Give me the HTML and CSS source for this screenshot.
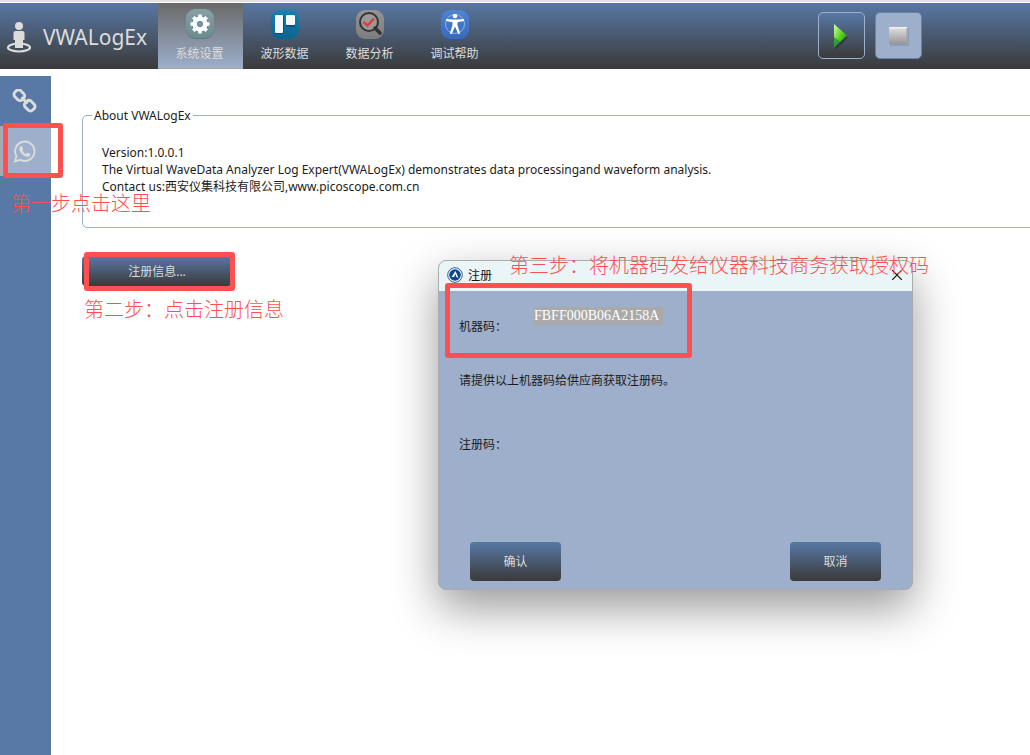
FILE: index.html
```html
<!DOCTYPE html>
<html lang="zh-CN">
<head>
<meta charset="utf-8">
<meta name="viewport" content="width=device-width, initial-scale=1">
<title>VWALogEx</title>
<link rel="stylesheet" href="styles.css">
</head>
<body>
<header class="topbar">
  <div class="brand">
    <svg class="brand-icon" viewBox="0 0 26 32" aria-hidden="true">
      <ellipse cx="13" cy="26.500" rx="11" ry="4" fill="none" stroke="#dcdcdc" stroke-width="2.200"/>
      <path d="M9.500 10h7q2 0 2 2v7h-1.500v8h-8v-8h-1.500v-7q0-2 2-2z" fill="#dcdcdc"/>
      <circle cx="13" cy="5" r="4" fill="#dcdcdc"/>
    </svg>
    <span>VWALogEx</span>
  </div>
  <nav class="tabs">
    <button class="tab tab-active" type="button">
      <svg class="tab-icon" viewBox="0 0 30 30" aria-hidden="true">
        <defs><linearGradient id="g1" x2="0" y2="1"><stop stop-color="#85a0a4"/><stop offset="1" stop-color="#6c8c90"/></linearGradient></defs>
        <rect x="1" y="2" width="28" height="28" rx="9" fill="#4d6468" opacity=".6"/>
        <rect x="1" y="0" width="28" height="29" rx="9" fill="url(#g1)"/>
        <circle cx="15" cy="15" r="5.300" fill="none" stroke="#fff" stroke-width="4.300"/>
        <g stroke="#fff" stroke-width="3.600"><path d="M15 5.500v4M15 20.500v4M5.500 15h4M20.500 15h4M8.300 8.300l3 3M18.700 18.700l3 3M21.700 8.300l-3 3M11.300 18.700l-3 3"/></g>
      </svg>
      <span>系统设置</span>
    </button>
    <button class="tab" type="button">
      <svg class="tab-icon" viewBox="0 0 30 30" aria-hidden="true">
        <defs><linearGradient id="g2" x2="0" y2="1"><stop stop-color="#1581b2"/><stop offset="1" stop-color="#0d638f"/></linearGradient></defs>
        <rect x="1" y="1" width="28" height="29" rx="9" fill="url(#g2)"/>
        <rect x="5" y="7" width="9" height="18" rx="1" fill="#0b5175"/>
        <rect x="16" y="7" width="9" height="11" rx="1" fill="#0b5175"/>
        <rect x="5" y="6" width="8" height="18" rx="1" fill="#f4f8fa"/>
        <rect x="16" y="6" width="9" height="10" rx="1" fill="#f4f8fa"/>
      </svg>
      <span>波形数据</span>
    </button>
    <button class="tab" type="button">
      <svg class="tab-icon" viewBox="0 0 30 30" aria-hidden="true">
        <defs><linearGradient id="g3" x2="0" y2="1"><stop stop-color="#949494"/><stop offset="1" stop-color="#7d7d7d"/></linearGradient></defs>
        <rect x="1" y="1" width="28" height="29" rx="9" fill="url(#g3)"/>
        <circle cx="14" cy="13" r="9" fill="#999" stroke="#343434" stroke-width="2"/>
        <path d="M20 19l5 5" stroke="#303030" stroke-width="3.500" stroke-linecap="round"/>
        <path d="M8.500 13l4 3.500 6.500-7" fill="none" stroke="#e13b3b" stroke-width="2.500"/>
      </svg>
      <span>数据分析</span>
    </button>
    <button class="tab" type="button">
      <svg class="tab-icon" viewBox="0 0 30 30" aria-hidden="true">
        <defs><linearGradient id="g4" x2="0" y2="1"><stop stop-color="#4d84d2"/><stop offset="1" stop-color="#3869bf"/></linearGradient></defs>
        <rect x="1" y="1" width="28" height="29" rx="9" fill="url(#g4)"/>
        <circle cx="15" cy="15" r="9.500" fill="none" stroke="#8db4ed" stroke-width="1"/>
        <circle cx="15" cy="7" r="2.300" fill="#fff"/>
        <path d="M6 10l7 .5h4l7-.5v2l-6.500 1.200v3l2.700 8.300-2 .5-3.200-7.500-3.200 7.500-2-.5 2.700-8.300v-3l-6.500-1.200z" fill="#fff"/>
      </svg>
      <span>调试帮助</span>
    </button>
  </nav>
  <div class="run-controls">
    <button class="run-button" type="button" aria-label="运行">
      <svg class="run-icon" viewBox="0 0 28 28" aria-hidden="true">
        <defs><linearGradient id="g5" x2="1" y2="1"><stop stop-color="#d5ffb8"/><stop offset=".5" stop-color="#58d21c"/><stop offset="1" stop-color="#15770a"/></linearGradient></defs>
        <path d="M7 4.500l13 11-12 12z" fill="#20262e" opacity=".5"/>
        <path d="M6 2l13 11.500-13 12z" fill="url(#g5)"/>
        <path d="M6 15v10.500l6-6z" fill="#0e7b3a" opacity=".6"/>
      </svg>
    </button>
    <button class="run-button run-button-stop" type="button" aria-label="停止">
      <svg class="run-icon" viewBox="0 0 28 28" aria-hidden="true">
        <defs><linearGradient id="g6" x2="0" y2="1"><stop stop-color="#e2e2e2"/><stop offset="1" stop-color="#969696"/></linearGradient></defs>
        <rect x="5" y="6" width="19" height="18" fill="#65748d" opacity=".3"/>
        <rect x="4" y="5" width="19" height="17" fill="url(#g6)"/>
        <path d="M4 5h19l-1.500 1.500h-16z" fill="#f0f0f0"/>
        <path d="M23 5v17l-1.500-1.500v-14z" fill="#a4a4a4"/>
      </svg>
    </button>
  </div>
</header>
<div class="workspace">
  <nav class="sidebar">
    <button class="side-item" type="button" aria-label="连接">
      <svg class="side-icon" viewBox="0 0 24 24" aria-hidden="true">
        <g fill="none" stroke="#dcdcdc" stroke-width="2.800">
          <rect x="2" y="2" width="10" height="8" rx="3" transform="rotate(45 7 6)"/>
          <rect x="12" y="12" width="10" height="8" rx="3" transform="rotate(45 17 16)"/>
          <path d="M9 8l6 6"/>
        </g>
      </svg>
    </button>
    <button class="side-item side-item-active" type="button" aria-label="关于">
      <svg class="side-icon" viewBox="0 0 24 24" aria-hidden="true">
        <path d="M2.800 21.500l1.500-5a9.300 9.300 0 1 1 3.700 3.500z" fill="none" stroke="#dcdcdc" stroke-width="1.800"/>
        <path d="M8.200 7q.8-.8 1.500.1l1 2.100q.2.700-.8 1.600 1.400 2.600 3.700 3.500l1.300-1.300 2.500 1.200q.8.600-.2 1.900-1.500 1.500-4 .7-4.600-1.600-6.200-6.200-.5-2.200 1.200-3.600z" fill="#dcdcdc"/>
      </svg>
    </button>
  </nav>
  <main class="content">
    <fieldset class="about">
      <legend>About VWALogEx</legend>
      <p>Version:1.0.0.1</p>
      <p>The Virtual WaveData Analyzer Log Expert(VWALogEx) demonstrates data processingand waveform analysis.</p>
      <p>Contact us:西安仪集科技有限公司,www.picoscope.com.cn</p>
    </fieldset>
    <button class="action register-open" type="button">注册信息...</button>
  </main>
</div>

<section class="dialog" role="dialog" aria-labelledby="dialog-title">
  <div class="dialog-title">
    <svg class="dialog-logo" viewBox="0 0 16 16" aria-hidden="true">
      <circle cx="8" cy="8" r="7.300" fill="#fff" stroke="#31598f" stroke-width="1"/>
      <circle cx="8" cy="8" r="5.800" fill="#0c4590"/>
      <path d="M8.500 4l3 7-2-1-1-3-1.500 3h-2.500z" fill="#fff"/>
    </svg>
    <h1 id="dialog-title">注册</h1>
    <button class="dialog-close" type="button" aria-label="关闭">
      <svg viewBox="0 0 10 10" aria-hidden="true"><path d="M0 0l10 10M10 0l-10 10" stroke="#111" stroke-width="1.200"/></svg>
    </button>
  </div>
  <form class="dialog-form">
    <div class="field">
      <label for="machine-code">机器码：</label>
      <input class="machine-code" id="machine-code" type="text" value="FBFF000B06A2158A" readonly>
    </div>
    <p class="hint">请提供以上机器码给供应商获取注册码。</p>
    <div class="field field-license">
      <label for="license-code">注册码：</label>
      <input class="license-code" id="license-code" type="text">
    </div>
    <div class="dialog-actions">
      <button class="action" type="button">确认</button>
      <button class="action" type="button">取消</button>
    </div>
  </form>
</section>

<div class="mark mark-one"></div>
<div class="mark mark-two"></div>
<div class="mark mark-three"></div>
<p class="note note-one">第一步点击这里</p>
<p class="note note-two">第二步：点击注册信息</p>
<p class="note note-three">第三步：将机器码发给仪器科技商务获取授权码</p>
</body>
</html>
```
FILE: styles.css
```css
* {
  box-sizing: border-box;
}

body {
  --steel: #5878a5;
  --pale: #9dafcb;
  --dark: #3a3a3a;
  --red: #ff5050;
  position: relative;
  display: flex;
  flex-direction: column;
  min-height: 100vh;
  margin: 0;
  overflow: hidden;
  background: #fff;
  color: #1c1c1c;
  font: 12px/17px "Noto Sans", "Noto Sans CJK SC", sans-serif;
}

button,
input {
  margin: 0;
  padding: 0;
  border: 0;
  background: none;
  color: inherit;
  font: inherit;
}

p,
h1 {
  margin: 0;
}

svg {
  display: block;
}

.topbar {
  display: flex;
  height: 69px;
  border-top: 2px solid #e1e1e1;
  box-shadow: inset 0 1px #fff;
  background: linear-gradient(var(--steel), var(--dark));
}

.brand {
  display: flex;
  align-items: center;
  gap: 11px;
  width: 158px;
  padding: 2px 0 0 6px;
  color: #dcdcdc;
  font-size: 21px;
  line-height: 28px;
}

.brand-icon {
  width: 26px;
  height: 32px;
}

.tabs {
  display: flex;
  padding-top: 1px;
}

.tab {
  display: flex;
  flex-direction: column;
  align-items: center;
  gap: 6px;
  width: 85px;
  padding: 6px 2px 0 0;
  color: #dcdcdc;
}

.tab-active {
  border-bottom: 1px solid #a9a9a9;
  background: linear-gradient(#696969, var(--pale));
}

.tab-icon {
  width: 30px;
  height: 30px;
}

.run-controls {
  display: flex;
  align-items: center;
  gap: 10px;
  margin-left: auto;
  padding-right: 108px;
}

.run-button {
  display: grid;
  place-items: center;
  width: 47px;
  height: 47px;
  border: 1px solid var(--pale);
  border-radius: 5px;
  background: linear-gradient(var(--steel), var(--dark));
}

.run-button-stop {
  border-color: #6484b4;
  background: var(--pale);
}

.run-icon {
  width: 28px;
  height: 28px;
}

.workspace {
  display: flex;
  flex: 1;
  margin-top: 7px;
}

.sidebar {
  flex: none;
  width: 51px;
  background: var(--steel);
}

.side-item {
  display: flex;
  align-items: center;
  width: 100%;
  height: 50px;
  padding-left: 12px;
}

.side-item-active {
  padding-left: 10px;
  border-left: 2px solid #a9a9a9;
  background: var(--pale);
}

.side-icon {
  width: 25px;
  height: 25px;
}

.content {
  flex: 1;
  min-width: 0;
  padding: 31px 0 0 31px;
}

.about {
  margin: 0 -8px 28px 0;
  padding: 20px 19px 32px;
  border: 1px solid var(--pale);
  border-radius: 5px;
}

.about legend {
  margin-left: -10px;
  padding: 0 2px;
}

.action {
  border-radius: 4px;
  background: linear-gradient(var(--steel), var(--dark));
  color: #dcdcdc;
}

.register-open {
  width: 150px;
  height: 30px;
}

.dialog {
  position: absolute;
  top: 260px;
  left: 438px;
  width: 475px;
  border: 1px solid #a9acad;
  border-radius: 8px;
  background: var(--pale);
  box-shadow: 0 18px 46px rgba(0, 0, 0, 0.4);
}

.dialog-title {
  display: flex;
  align-items: center;
  gap: 5px;
  height: 30px;
  padding: 0 9px 2px 8px;
  border-radius: 7px 7px 0 0;
  background: #eaf5f8;
  color: #111;
}

.dialog-title h1 {
  flex: 1;
  font-size: 12px;
  font-weight: 400;
}

.dialog-logo {
  width: 16px;
  height: 16px;
}

.dialog-close {
  width: 12px;
  padding: 1px;
}

.dialog-form {
  padding: 16px 31px 8px 20px;
}

.field {
  display: grid;
  grid-template-columns: 75px 1fr;
  align-items: center;
  min-height: 38px;
}

.field-license {
  min-height: 20px;
  margin-top: 43px;
}

.machine-code {
  align-self: start;
  width: 129px;
  height: 18px;
  background: #a9a9a9;
  color: #fff;
  font: 14px/18px "Liberation Serif", serif;
}

.license-code {
  height: 20px;
}

.hint {
  margin-top: 26px;
  line-height: 20px;
}

.dialog-actions {
  display: flex;
  justify-content: space-between;
  margin-top: 88px;
  padding-left: 11px;
}

.dialog-actions .action {
  width: 91px;
  height: 39px;
}

.mark {
  position: absolute;
  border: 5px solid var(--red);
  border-radius: 3px;
  pointer-events: none;
}

.mark-one {
  top: 123px;
  left: 3px;
  width: 60px;
  height: 55px;
}

.mark-two {
  top: 252px;
  left: 84px;
  width: 151px;
  height: 39px;
}

.mark-three {
  top: 283px;
  left: 445px;
  width: 247px;
  height: 75px;
}

.note {
  position: absolute;
  color: var(--red);
  font: 300 20px/28px "Noto Sans CJK SC", sans-serif;
  white-space: nowrap;
}

.note-one {
  top: 189px;
  left: 11px;
}

.note-two {
  top: 295px;
  left: 84px;
}

.note-three {
  top: 251px;
  left: 509px;
}
```
